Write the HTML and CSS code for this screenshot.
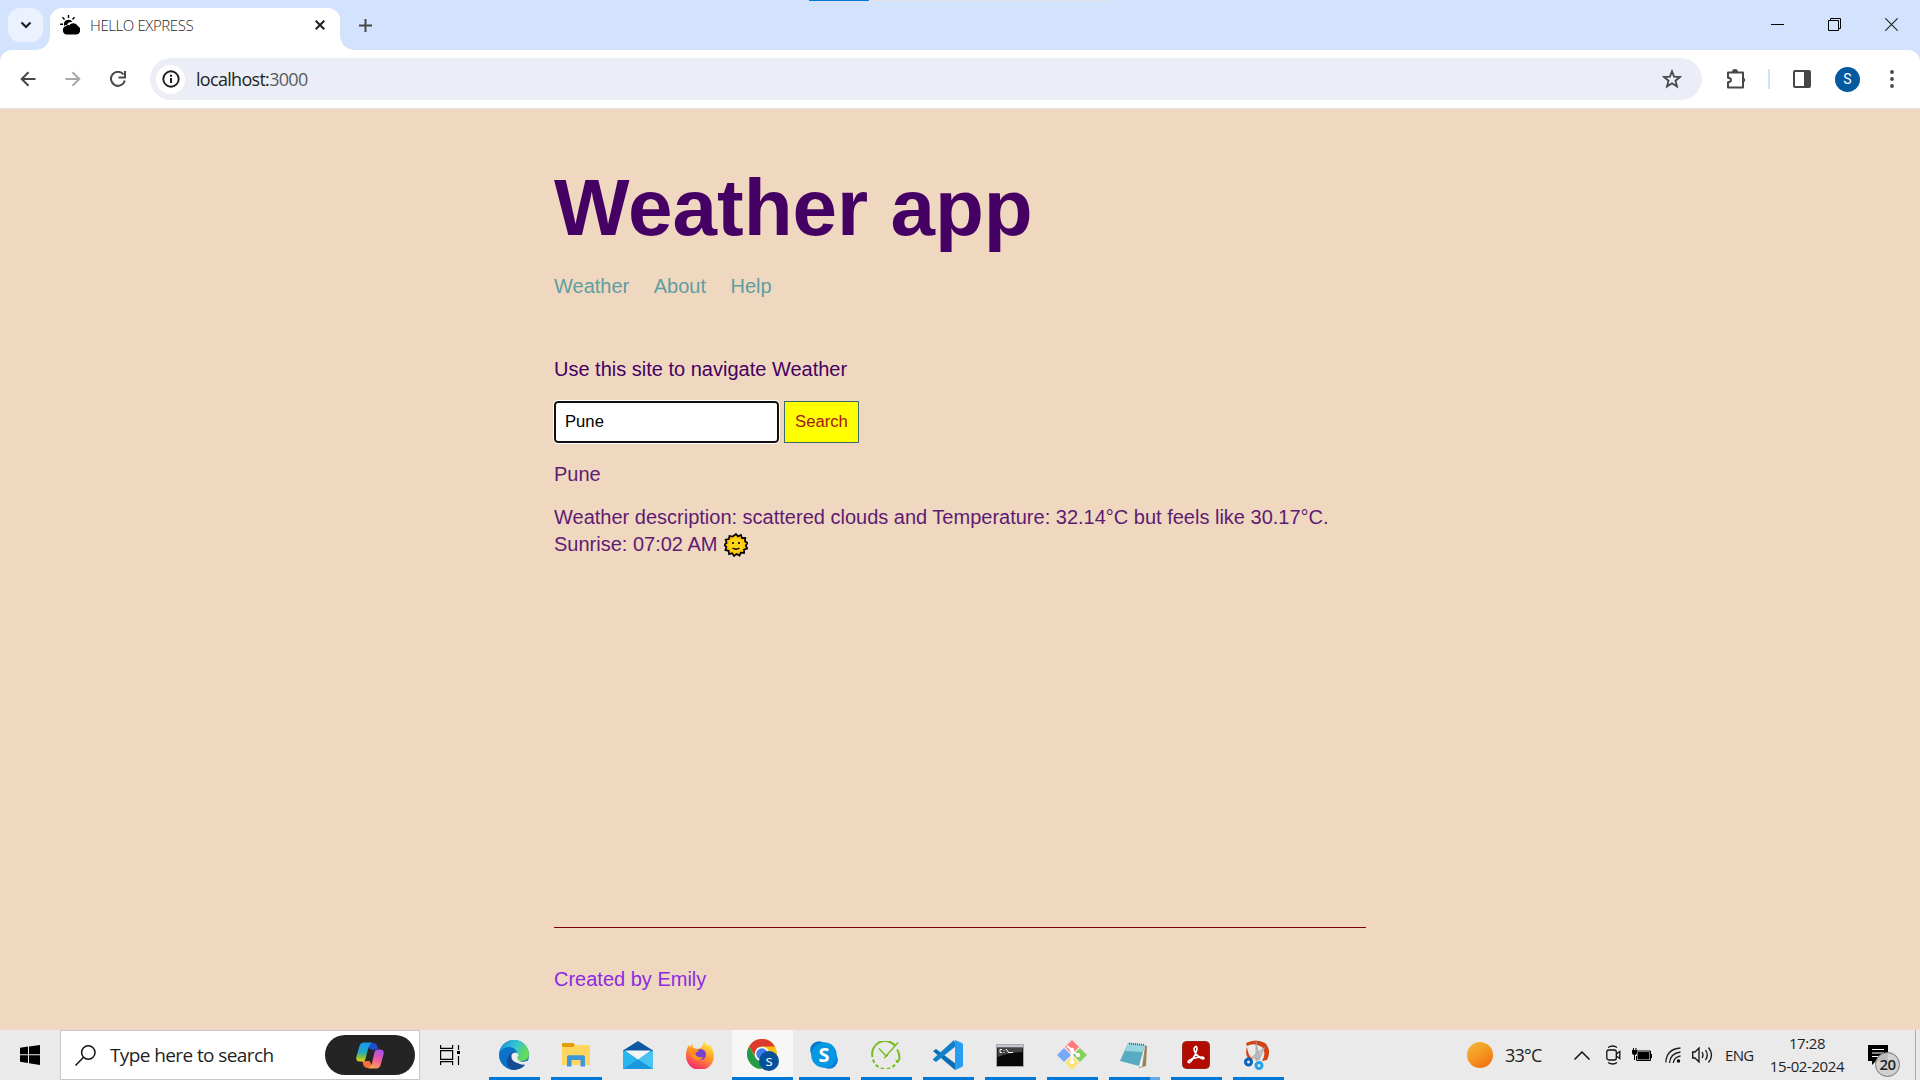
FILE: index.html
```html
<!DOCTYPE html>
<html lang="en">
<head>
<meta charset="utf-8">
<title>HELLO EXPRESS</title>
<link rel="stylesheet" href="styles.css">
</head>
<body>
<div class="screen">
  <header class="browser">
    <div class="capture-bar"></div>
    <div class="tab-strip">
      <button class="tab-search" aria-label="Search tabs"><svg width="12" height="8" viewBox="0 0 12 8"><path d="M1.500 1.500 6 6l4.500-4.500" fill="none" stroke="#1f1f1f" stroke-width="2.200"/></svg></button>
      <div class="tab">
        <svg class="favicon" width="20" height="20" viewBox="0 0 20 20"><path d="M8.500 0v3M2.500 2.300l2 2.200M14.500 2.300l-2 2.200M0 9.300h3" stroke="#000" stroke-width="1.400"/><path d="M4 10a4.600 4.600 0 0 1 8.500-3Q8 6.500 7 10Q5 9.600 4.300 11z"/><path d="M6.800 19.500a4.300 4.300 0 0 1-.8-8.400 2.800 2.800 0 0 1 3.200-.8A5.200 5.200 0 0 1 17.800 11a4.500 4.500 0 0 1-1.500 8.500z"/></svg>
        <span class="tab-title">HELLO EXPRESS</span>
        <svg class="tab-close" width="10" height="10" viewBox="0 0 10 10"><path d="m.7.7 8.600 8.600M9.300.7.7 9.300" stroke="#1f1f1f" stroke-width="2"/></svg>
      </div>
      <svg class="new-tab" width="13" height="13" viewBox="0 0 13 13"><path d="M6.500 0v13M0 6.500h13" stroke="#474747" stroke-width="2"/></svg>
      <div class="window-buttons">
        <svg width="13" height="13" viewBox="0 0 13 13"><path d="M0 6.500h13" stroke="#000"/></svg>
        <svg width="13" height="13" viewBox="0 0 13 13"><path d="M.5 2.500h10v10H.5zM2.500 2V.5h10v10H11" fill="none" stroke="#000"/></svg>
        <svg width="13" height="13" viewBox="0 0 13 13"><path d="m.3.3 12.400 12.400M12.700.3.3 12.700" stroke="#222" stroke-width="1.100"/></svg>
      </div>
    </div>
    <div class="toolbar">
      <svg class="nav-icon" width="16" height="16" viewBox="0 0 16 16"><path d="M15.500 8H2M8.500 1.200 1.700 8l6.800 6.800" fill="none" stroke="#474747" stroke-width="2"/></svg>
      <svg class="nav-icon" width="16" height="16" viewBox="0 0 16 16"><path d="M.5 8H14M7.500 1.200 14.300 8l-6.800 6.800" fill="none" stroke="#a8a8a8" stroke-width="2"/></svg>
      <svg class="nav-icon" width="16" height="16" viewBox="0 0 16 16"><path d="M13.500 3.500A7 7 0 1 0 14.800 9.500" fill="none" stroke="#474747" stroke-width="2"/><path d="M15 0v6.500H8.500" fill="none" stroke="#474747" stroke-width="2"/></svg>
      <div class="address">
        <span class="site-info"><svg width="18" height="18" viewBox="0 0 18 18"><circle cx="9" cy="9" r="7.700" fill="none" stroke="#1f1f1f" stroke-width="1.900"/><path d="M8 8h2v5H8zM8 4.800h2v2H8z" fill="#1f1f1f"/></svg></span>
        <span class="url">localhost:<span class="port">3000</span></span>
        <svg class="star" width="20" height="20" viewBox="0 0 20 20"><path d="m10 2.300 2.100 5.300 5.900.4-4.500 3.700 1.500 5.700-5-3.200-5 3.200 1.500-5.700L2 8l5.900-.4z" fill="none" stroke="#474747" stroke-width="1.800"/></svg>
      </div>
      <svg class="extensions" width="21" height="20" viewBox="0 0 21 20"><path d="M2 3.500h15v15H2v-5.200q3-.3 3-2.300t-3-2.300z" fill="none" stroke="#474747" stroke-width="2" stroke-linejoin="round"/><path d="M6 3a3 3 0 0 1 6 0zM17.500 8.500a2.700 2.700 0 0 1 0 5z" fill="#474747"/></svg>
      <span class="divider"></span>
      <svg class="panel" width="18" height="18" viewBox="0 0 18 18"><rect x="1" y="1" width="16" height="16" rx="1" fill="none" stroke="#474747" stroke-width="2"/><path d="M11 1h6v16h-6z" fill="#474747"/></svg>
      <span class="avatar">S</span>
      <svg class="menu" width="4" height="18" viewBox="0 0 4 18" fill="#474747"><circle cx="2" cy="2" r="1.900"/><circle cx="2" cy="9" r="1.900"/><circle cx="2" cy="16" r="1.900"/></svg>
    </div>
  </header>

  <div class="page">
    <main class="content">
      <h1>Weather app</h1>
      <nav><a>Weather</a><a>About</a><a>Help</a></nav>
      <p class="intro">Use this site to navigate Weather</p>
      <form class="search-form"><input type="text" value="Pune" aria-label="City"><button type="button">Search</button></form>
      <p class="city">Pune</p>
      <p class="forecast">Weather description: scattered clouds and Temperature: 32.14°C but feels like 30.17°C.<br>Sunrise: 07:02 AM <svg class="sun" width="24" height="24" viewBox="0 0 24 24"><path d="m12 1 2 2.500 3-1.500 1 3.200 3.300-.2-.3 3.300 2.500 1.700-1.700 2.500 1.400 3-3.200 1 .2 3.300-3.400-.2-1.300 3-3-1.500-2.500 1.900-1.800-2.700-3.100.8-.5-3.300-3.200-.6 1-3.100-2.300-2.200 2.500-2-.9-3.200 3.200-.6.5-3.200 3.200.7z" fill="#ffc60b" stroke="#000" stroke-width="1.700"/><circle cx="12" cy="12" r="6.800" fill="#ffd51d"/><path d="M8.500 15q3.500 2.500 7 0" fill="none" stroke="#000" stroke-width="1.400"/><circle cx="9" cy="10" r="1.100"/><circle cx="15" cy="10" r="1.100"/></svg></p>
    </main>
    <footer class="footer">Created by Emily</footer>
  </div>

  <div class="taskbar">
    <div class="start"><svg width="20" height="20" viewBox="0 0 20 20"><path d="M0 2.700 8 1.600v7.700H0zM9 1.400 20 0v9.300H9zM0 10.300h8V18l-8-1.200zM9 10.300h11V20L9 18.300z"/></svg></div>
    <div class="search-box">
      <svg class="lens" width="21" height="21" viewBox="0 0 21 21"><circle cx="13.300" cy="7.500" r="6.700" fill="none" stroke="#111" stroke-width="1.500"/><path d="M8.500 12.300.5 20.500" stroke="#111" stroke-width="1.500"/></svg>
      <span class="search-label">Type here to search</span>
      <span class="copilot"><svg width="28" height="27" viewBox="0 0 28 27">
        <defs><linearGradient id="cpa" x1="0" y1="0" x2="0" y2="1"><stop offset="0" stop-color="#159df3"/><stop offset=".5" stop-color="#25a8c8"/><stop offset=".75" stop-color="#78bd45"/><stop offset="1" stop-color="#f4d010"/></linearGradient><linearGradient id="cpb" x1=".6" y1="0" x2=".3" y2="1"><stop offset="0" stop-color="#a552ee"/><stop offset=".5" stop-color="#ef5b9d"/><stop offset="1" stop-color="#fba451"/></linearGradient></defs>
        <path d="M14 1h4q3 0 4 6l-5 1-5-2z" fill="#1b50d2"/><path d="M6.500 19h7l4 7H12q-4 0-5-4z" fill="#f0703e"/>
        <path d="M8 .5h8.500Q13 2 11.800 8L9.500 17q-.7 2.500-3 2.500H4Q-.5 19.500.3 15L3.500 4Q4.500.5 8 .5z" fill="url(#cpa)"/>
        <path d="M20 26.500h-8q3-1 4.200-6L18.500 10q.7-2.500 3-2.500H24q4.500 0 3.600 4.500l-3 11q-1 3.500-4.600 3.500z" fill="url(#cpb)"/></svg></span>
    </div>
    <div class="task-view"><svg width="20" height="20" viewBox="0 0 20 20" fill="none" stroke="#000" stroke-width="1.200"><path d="M.6 0v3.400h12V0M.6 20v-3.400h12V20M.6 5.600h12v8.800H.6zM18.500 0v5M18.500 11v9"/><path d="M17 6h3v3h-3z" fill="#000" stroke="none"/></svg></div>
    <div class="apps">
      <div class="app open"><svg width="30" height="30" viewBox="0 0 30 30"><defs><linearGradient id="ea" x1="0" y1="0" x2="1" y2=".4"><stop offset="0" stop-color="#1687d5"/><stop offset=".55" stop-color="#32c4d9"/><stop offset="1" stop-color="#66dc55"/></linearGradient></defs><circle cx="15" cy="15" r="15" fill="#0b72c9"/><path d="M.3 12A15 15 0 0 1 30 14q0 7-7.500 7-6 0-4.500-4Q20 9 11 7 4 7 .3 12z" fill="url(#ea)"/><path d="M17.500 16q0 5.500 6 5.500 2.500 0 5-1Q25 29 15 30 6 28 8.500 19q2-7 8-7z" fill="#124d91"/><path d="M12.500 17a3.500 3.500 0 0 1 7-1.500q-2 1.500-.5 4 2.500 3.500 9 1.500l2-1-.5 3-1.500 2Q22 25 17 22.500q-4.500-2-4.500-5.500z" fill="#ececec"/></svg></div>
      <div class="app open"><svg width="28" height="24" viewBox="0 0 28 24"><path d="M0 1.500Q0 0 1.500 0H11l2 2h13.500q1.500 0 1.500 1.500V22H0z" fill="#ffd45f"/><path d="M0 1.200Q0 0 1.200 0H11l2 1.500L11 4H0z" fill="#df9d08"/><path d="M5 23.500V14q0-1.800 1.800-1.800h14.400Q23 12.200 23 14v9.500h-4.500V17h-9v6.500z" fill="#3c96d7"/></svg></div>
      <div class="app"><svg width="30" height="28" viewBox="0 0 30 28"><path d="M0 9.500 15 0l15 9.500V19H0z" fill="#0c58a5"/><path d="M0 10v18h30V10z" fill="#2bb5ee"/><path d="m15 18.500 15 9.500V10z" fill="#4cc2f3"/><path d="M0 28h30l-15-9.500z" fill="#1a98df"/><path d="M2 9.500h26L15 18.500z" fill="#f5f5f5"/></svg></div>
      <div class="app"><svg width="28" height="28" viewBox="0 0 28 28"><defs><linearGradient id="fa" x1=".8" y1="0" x2=".3" y2="1"><stop offset="0" stop-color="#fff24a"/><stop offset=".45" stop-color="#ff9b28"/><stop offset="1" stop-color="#f62170"/></linearGradient></defs><path d="M18 0q1 3 4 5l1-2q5 6 5 12a14 14 0 0 1-28 0Q0 8 3 4l1 2 3-3v4l4 1Q17 7 18 0z" fill="url(#fa)"/><circle cx="14.500" cy="13.500" r="5.500" fill="#7542d2"/><path d="M4 8q6-2 9 2l-4 2q1 5 8 4-2 4-7 3-7-2-6-11z" fill="#ff8d24"/></svg></div>
      <div class="app open active"><svg width="32" height="32" viewBox="0 0 32 32"><circle cx="15" cy="15" r="15" fill="#fbc116"/><path d="M2 7.500A15 15 0 0 1 28 7.500H15a7.500 7.500 0 0 0-7 9z" fill="#dc3b2d"/><path d="M2 7.500 9 19q2.500 4 8 3.500L14 30A15 15 0 0 1 2 7.500z" fill="#249b4b"/><circle cx="15" cy="15" r="7.300" fill="#fff"/><circle cx="15" cy="15" r="5.700" fill="#3c7ded"/><circle cx="22" cy="22" r="10" fill="#07509a"/><text x="22" y="26.500" text-anchor="middle" class="icon-letter small">s</text></svg></div>
      <div class="app open"><svg width="28" height="28" viewBox="0 0 28 28"><circle cx="9" cy="9" r="8.800" fill="#0678ca"/><circle cx="19" cy="19" r="8.800" fill="#0d79d9"/><circle cx="14" cy="14" r="12.800" fill="#0597e2"/><text x="14" y="21" text-anchor="middle" class="icon-letter big">S</text></svg></div>
      <div class="app open"><svg width="30" height="28" viewBox="0 0 30 28" fill="none" stroke="#78bd1e" stroke-width="2"><path d="M1.500 16A13 13 0 0 1 24 4.500"/><path d="M26 8.500A13 13 0 0 1 28 19"/><path d="M2 18.500A13 13 0 0 0 26.500 20" stroke-dasharray="3.500 2.500"/><path d="m8 7.500 7 7.500L27 1.500M13 17l4-3" stroke-width="1.500"/><path d="M24 19h5l-2 3z" fill="#78bd1e" stroke="none"/></svg></div>
      <div class="app open"><svg width="30" height="30" viewBox="0 0 30 30"><path d="m0 11 3-2 20 15-1 6L1 12z" fill="#096db5"/><path d="m0 19 21-19 2 6L3 22l-3-2z" fill="#0f80ca"/><path d="m22 0 7 3q1 .5 1 2v20q0 1.500-1 2l-7 3z" fill="#269df0"/></svg></div>
      <div class="app open"><svg width="28" height="23" viewBox="0 0 28 23"><path d="M.5.5h27v22H.5z" fill="#090909" stroke="#a6aab0"/><path d="M1 1h26v2.500H1z" fill="#c5c9cf"/><path d="M1.500 4h25v4Q15 8 1.500 13z" fill="#444"/><path d="M6 5.500H4v3h2M8 6v.8M8 8v.8M10 5l3 4M13 8.500h4" fill="none" stroke="#fff"/></svg></div>
      <div class="app open"><svg width="30" height="30" viewBox="0 0 30 30"><path d="m15 0 7 7-7 7-7-7z" fill="#ff7b7c"/><path d="m7 8 7 7-7 7-7-7z" fill="#78a9fb"/><path d="m23 8 7 7-7 7-7-7z" fill="#86cf5b"/><path d="m15 16 7 7-7 7-7-7z" fill="#ffe17a"/><path d="M10 6l5 4v12M15 11l6 4" fill="none" stroke="#fff" stroke-width="1.800"/><circle cx="15" cy="10" r="2.200" fill="#fff"/><circle cx="21" cy="15" r="2.200" fill="#fff"/><circle cx="15" cy="22" r="2.200" fill="#fff"/></svg></div>
      <div class="app open more"><svg width="30" height="27" viewBox="0 0 30 27"><path d="m24 3 4 1-1 20-7 2z" fill="#9a8358"/><path d="m22 3 4 1-3 21-6-1z" fill="#eef3f4"/><path d="M9 1 26 3l-6 21L1 19z" fill="#58abc0"/><path d="M9 1 26 3l-2 7L6 9z" fill="#99d5de"/><path d="M10 1.500 26 3" stroke="#666" stroke-width="2" stroke-dasharray="1 1"/></svg></div>
      <div class="app open"><svg width="28" height="28" viewBox="0 0 28 28"><rect x=".5" y=".5" width="27" height="27" rx="4" fill="#b30b00" stroke="#942720"/><path d="M13 6q2-2 2 2-1 6-5 11-3 4-4 2 0-2 7-4 8-2 9 0 0 2-4-.5-6-4-6-9z" fill="none" stroke="#fff" stroke-width="1.600"/></svg></div>
      <div class="app open"><svg width="27" height="30" viewBox="0 0 27 30"><path d="M2 3Q12-2 21 3q7 7 2 17l-5 1q5-8 0-14Q10 2 3 6zM3 7q1 9 6 12l-2 2Q0 16 3 7z" fill="#d44112"/><path d="M12 1 15 17 12 21zM21 7l-6 13-7-3z" fill="#c3c5c6" stroke="#969696" stroke-width=".6"/><circle cx="4.500" cy="22" r="3" fill="none" stroke="#0865ba" stroke-width="3"/><circle cx="15" cy="25.500" r="3" fill="none" stroke="#25a3e9" stroke-width="3"/></svg></div>
    </div>
    <div class="tray">
      <span class="weather-dot"></span><span class="temp">33°C</span>
      <svg class="chevron" width="16" height="9" viewBox="0 0 16 9"><path d="m.5 8.500 7.500-7.500 7.500 7.500" fill="none" stroke="#111" stroke-width="1.500"/></svg>
      <svg class="camera" width="16" height="20" viewBox="0 0 16 20" fill="none" stroke="#111" stroke-width="1.300"><rect x=".8" y="5" width="9.500" height="10" rx="2"/><path d="m10.300 9 3.500-2.500v7L10.300 11M2 2.500q5-3 9 0M2 17.500q5 3 9 0"/></svg>
      <svg class="battery" width="20" height="14" viewBox="0 0 20 14"><path d="M5 3h13.500v9.500H4.500V8" fill="none" stroke="#000"/><path d="M5.500 4H17.500v7.500h-12zM18.500 6H20v4h-1.500zM0 2h5v3q0 2-2.500 2T0 5zM1 0h1v2H1zM3.500 0h1v2h-1zM2 7h1v5H2z"/></svg>
      <svg class="wifi" width="17" height="17" viewBox="0 0 17 17" fill="none" stroke="#222" stroke-width="1.300"><path d="M.8 15.500Q1.500 2 15.500 1M4.500 16Q5 6.500 15.500 5M8.300 16Q9 10 15.500 9"/><circle cx="13.500" cy="14" r="1.700" fill="#000" stroke="none"/></svg>
      <svg class="volume" width="21" height="18" viewBox="0 0 21 18" fill="none" stroke="#111" stroke-width="1.300"><path d="M.7 6H3l4-4v14l-4-4H.7zM10 6q2 3 0 6M13.500 4q3.500 5 0 10M16.500 1.500q6 7.500 0 15"/></svg>
      <span class="lang">ENG</span>
      <div class="clock"><span class="time">17:28</span><span class="date">15-02-2024</span></div>
      <div class="notices"><svg width="20" height="20" viewBox="0 0 20 20"><path d="M0 0h20v16H8l-4 4v-4H0z"/><path d="M4 4.500h12M4 8h12M4 11.500h7" stroke="#fff" stroke-width="1.200"/></svg><span class="badge">20</span></div>
      <span class="show-desktop"></span>
    </div>
  </div>
</div>
</body>
</html>
```

FILE: styles.css
```css
* { box-sizing: border-box; }
body { margin: 0; overflow: hidden; }
svg { display: block; flex: none; }
.screen { width: 1920px; height: 1080px; display: flex; flex-direction: column; font-family: "Open Sans", "Noto Sans", sans-serif; color: #1f1f1f; }

/* Browser frame */
.browser { height: 109px; flex: none; background: #d3e3fd; position: relative; }
.capture-bar { position: absolute; top: 0; left: 809px; width: 301px; height: 1px; background: linear-gradient(to right, #0078d7 60px, #e3e3e3 60px); }
.tab-strip { height: 50px; padding: 8px 0 0 8px; display: flex; align-items: flex-start; }
.tab-search { width: 35px; height: 34px; padding: 0; border: 0; border-radius: 12px; background: #ebf1fe; display: flex; align-items: center; justify-content: center; }
.tab { position: relative; width: 290px; height: 42px; margin-left: 7px; padding: 0 15px 8px 10px; border-radius: 12px 12px 0 0; background: #fff; display: flex; align-items: center; }
.tab::before, .tab::after { content: ""; position: absolute; bottom: 0; width: 14px; height: 14px; }
.tab::before { right: 100%; background: radial-gradient(circle at 0 0, transparent 13.5px, #fff 14px); }
.tab::after { left: 100%; background: radial-gradient(circle at 100% 0, transparent 13.5px, #fff 14px); }
.tab-title { margin-left: 10px; font-size: 15px; font-weight: 350; line-height: 20px; letter-spacing: -0.4px; white-space: nowrap; }
.tab-close { margin-left: auto; }
.new-tab { margin: 11px 0 0 19px; }
.window-buttons { margin: 10px 22px 0 auto; display: flex; gap: 44px; }
.toolbar { height: 59px; background: #fff; border-bottom: 1px solid #dde3ec; border-radius: 12px 12px 0 0; display: flex; align-items: center; padding-left: 20px; }
.nav-icon { margin-right: 29px; }
.address { width: 1552px; height: 42px; margin-left: -5px; border-radius: 21px; background: #ebeef7; display: flex; align-items: center; padding: 0 20px 0 6px; }
.site-info { width: 29px; height: 29px; border-radius: 50%; background: #fff; display: flex; align-items: center; justify-content: center; }
.url { margin-left: 11px; font-size: 18px; line-height: 24px; letter-spacing: -0.7px; }
.port { color: #5a5a60; }
.star { margin-left: auto; }
.extensions { margin-left: 24px; }
.divider { width: 2px; height: 20px; margin-left: 21px; background: #d3e3fd; }
.panel { margin-left: 23px; }
.avatar { width: 25px; height: 25px; margin-left: 24px; border-radius: 50%; background: #05599f; color: #fff; font: 14px/25px Roboto, sans-serif; text-align: center; }
.menu { margin-left: 30px; }

/* Web page */
.page { height: 921px; flex: none; background: #f0d7c0; padding-top: 53px; display: flex; flex-direction: column; align-items: center; font: 20px/23px "Liberation Sans", Arial, sans-serif; color: #440062; }
.content, .footer { width: 812px; }
.content { flex: 1; }
h1 { margin: 0; font-size: 80px; line-height: 92px; }
nav { margin-top: 21px; display: flex; gap: 24.5px; color: #5f9ea0; }
p { margin: 0; }
.intro { margin-top: 60px; }
.search-form { margin-top: 20px; display: flex; gap: 5px; height: 42px; }
.search-form input, .search-form button { font: 16.67px/20px "Liberation Sans", Arial, sans-serif; }
.search-form input { width: 225px; padding: 0 9px; border: 2px solid #101010; border-radius: 4px; color: #000; outline: 1px solid #fff; }
.search-form button { width: 75px; padding: 0; border: 1px solid #3a6a70; background: #ff0; color: #a3151b; }
.city { margin-top: 20px; color: #5d1c72; }
.forecast { margin-top: 18px; line-height: 27px; color: #5d1c72; }
.sun { display: inline-block; vertical-align: -4px; margin: -4px 0 -4px 1px; position: relative; top: -2px; }
.footer { height: 103px; border-top: 1px solid #7d0006; padding-top: 40px; color: #8a2be2; }

/* Taskbar */
.taskbar { height: 50px; flex: none; background: #eaeaea; display: flex; }
.start { width: 60px; display: flex; align-items: center; justify-content: center; }
.search-box { width: 360px; border: 1px solid #c8c8c8; background: #fff; display: flex; align-items: center; padding: 0 4px 0 14px; }
.search-label { margin-left: 14px; font-size: 19px; letter-spacing: -0.6px; white-space: nowrap; }
.copilot { width: 90px; height: 40px; margin-left: auto; border-radius: 20px; background: #242424; display: flex; align-items: center; justify-content: center; }
.task-view { width: 64px; padding-left: 20px; display: flex; align-items: center; }
.apps { display: flex; gap: 1px; }
.app { position: relative; width: 61px; height: 50px; padding-right: 2px; display: flex; align-items: center; justify-content: center; }
.app.open::after { content: ""; position: absolute; left: 5px; right: 5px; bottom: 0; height: 3px; background: #0078d7; }
.app.active { background: #f7f7f7; padding-right: 0; }
.app.active::after { left: 0; right: 0; }
.app.more::after { background: linear-gradient(to right, #0078d7 41px, #62aae6 41px); }
.icon-letter { fill: #fff; font-family: "Open Sans", sans-serif; }
.small { font-size: 15px; }
.big { font-size: 20px; font-weight: 700; }
.tray { width: 480px; margin-left: auto; padding-left: 27px; display: flex; align-items: center; }
.weather-dot { width: 26px; height: 26px; border-radius: 50%; background: linear-gradient(150deg, #edbd36, #f59620 50%, #f0650c); }
.temp { width: 69px; margin-left: 12px; font-size: 18px; letter-spacing: -0.8px; }
.camera { margin-left: 16px; }
.battery { margin-left: 10px; }
.wifi { margin-left: 13px; }
.volume { margin-left: 10px; }
.lang { width: 28px; margin-left: 12px; font-size: 15px; letter-spacing: -0.7px; }
.clock { width: 80px; margin-left: 14px; display: flex; flex-direction: column; align-items: center; font-size: 15px; line-height: 23px; letter-spacing: -0.4px; white-space: nowrap; }
.notices { position: relative; margin-left: 21px; }
.badge { position: absolute; left: 7px; top: 7px; width: 25px; height: 25px; border: 1px solid #777; border-radius: 50%; background: #cfcfcfe8; font-size: 15px; font-weight: 600; line-height: 23px; text-align: center; letter-spacing: -0.5px; }
.show-desktop { width: 1px; height: 50px; margin-left: 27px; background: #aaa; }
```
